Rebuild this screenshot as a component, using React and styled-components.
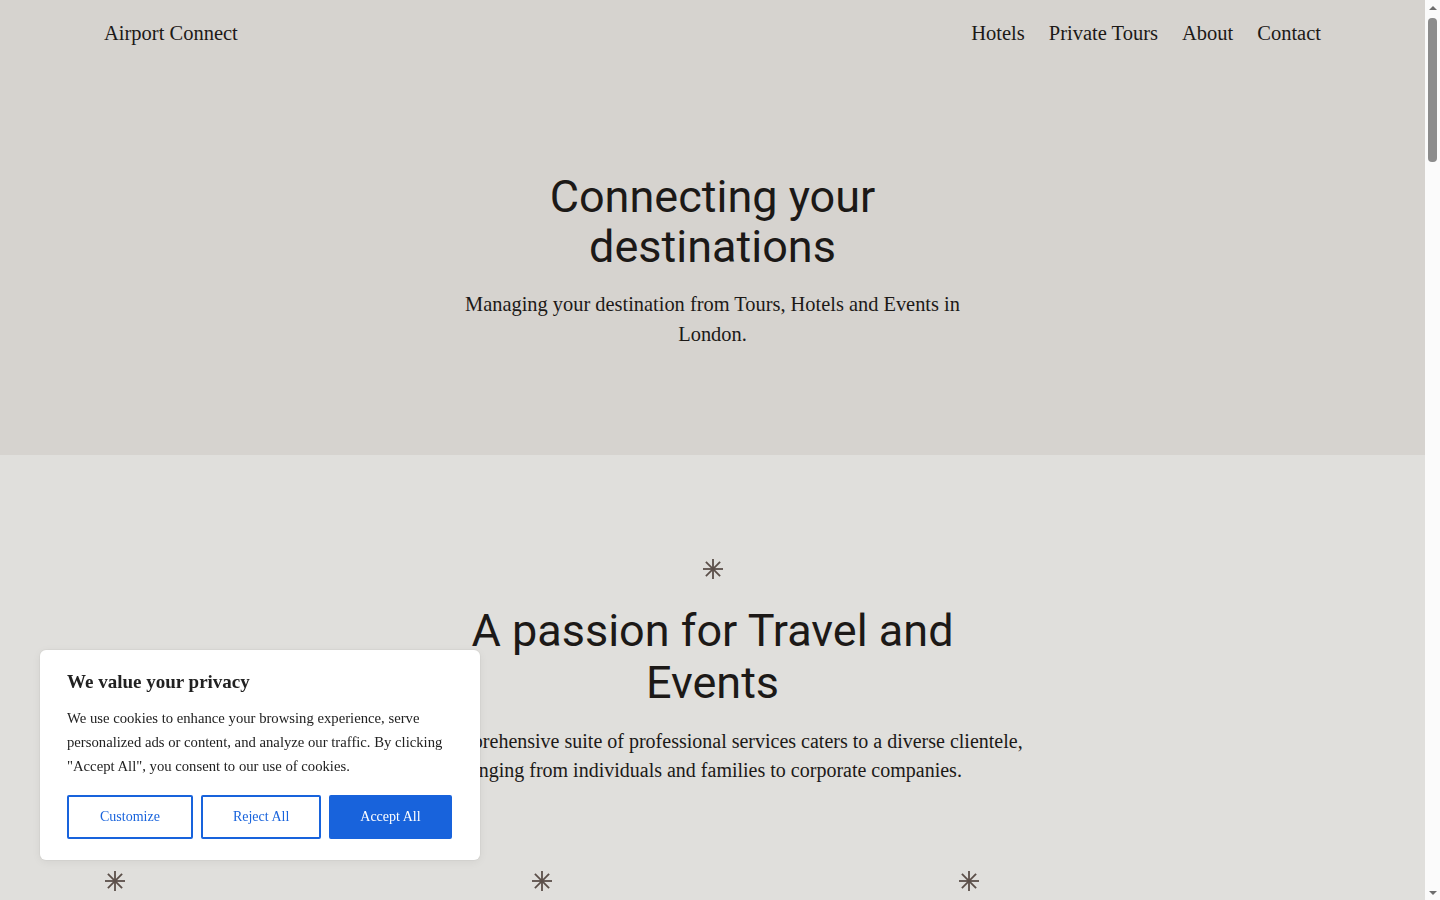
import React from "react";
import styled, { createGlobalStyle } from "styled-components";

const GlobalStyle = createGlobalStyle`
  html, body { margin: 0; padding: 0; }
  body {
    background: #e0dfdc;
    color: #1c1917;
    font-family: "Liberation Serif", "Times New Roman", serif;
    -webkit-font-smoothing: antialiased;
  }
  * { box-sizing: border-box; }
`;

const serif = `"Liberation Serif", "Times New Roman", serif`;
const sans = `Roboto, "Noto Sans", Arial, sans-serif`;

const Page = styled.div`
  margin-right: 15px;
`;

/* window scroll rail drawn at the right edge */
const Rail = styled.aside`
  position: fixed;
  top: 0;
  right: 0;
  width: 15px;
  height: 100vh;
  background: #fbfbfb;
  display: flex;
  flex-direction: column;
  z-index: 20;
`;

const RailArrow = styled.span`
  flex: 0 0 15px;
  display: flex;
  align-items: center;
  justify-content: center;
  &::before {
    content: "";
    border-left: 4px solid transparent;
    border-right: 4px solid transparent;
    ${(p) => (p.$down ? "border-top: 4px solid #6e6e6e;" : "border-bottom: 4px solid #6e6e6e;")}
  }
`;

const RailTrack = styled.div`
  flex: 1;
  padding: 3px 3px 0;
`;

const RailThumb = styled.div`
  width: 9px;
  height: 144px;
  border-radius: 4px;
  background: #8c8c8c;
`;

const Hero = styled.section`
  background: #d6d3cf;
  padding-bottom: 106px;
`;

const Header = styled.header`
  height: 66px;
  padding: 0 104px;
  display: flex;
  align-items: center;
  justify-content: space-between;
`;

const Brand = styled.a`
  font-family: ${serif};
  font-size: 20.5px;
  color: #1c1917;
  text-decoration: none;
`;

const Nav = styled.nav`
  display: flex;
  gap: 24px;
`;

const NavLink = styled.a`
  font-family: ${serif};
  font-size: 20.5px;
  color: #1c1917;
  text-decoration: none;
`;

const HeroBody = styled.div`
  padding-top: 106px;
  display: flex;
  flex-direction: column;
  align-items: center;
  text-align: center;
  gap: 17px;
`;

const DisplayTitle = styled.h1`
  margin: 0;
  max-width: ${(p) => p.$max || 440}px;
  font-family: ${sans};
  font-weight: 400;
  font-size: 45px;
  line-height: ${(p) => p.$lh || 50}px;
  color: #1c1917;
`;

const Lead = styled.p`
  margin: 0;
  max-width: ${(p) => p.$max || 530}px;
  font-family: ${serif};
  font-size: 20.4px;
  line-height: ${(p) => p.$lh || 30}px;
  color: #1c1917;
`;

const Section = styled.section`
  padding: ${(p) => p.$pad || "103px 104px 160px"};
  background: ${(p) => p.$bg || "transparent"};
`;

const Intro = styled.div`
  display: flex;
  flex-direction: column;
  align-items: center;
  text-align: center;
`;

const StarWrap = styled.span`
  display: inline-flex;
  width: 22px;
  height: 22px;
  color: #5b4f49;
  margin-bottom: ${(p) => p.$mb || 25}px;
`;

const Star = ({ mb }) => (
  <StarWrap $mb={mb}>
    <svg viewBox="0 0 22 22" width="22" height="22" fill="none" stroke="currentColor" strokeWidth="1.8" strokeLinecap="butt">
      <line x1="11" y1="1" x2="11" y2="21" />
      <line x1="1" y1="11" x2="21" y2="11" />
      <line x1="3.9" y1="3.9" x2="18.1" y2="18.1" />
      <line x1="18.1" y1="3.9" x2="3.9" y2="18.1" />
    </svg>
  </StarWrap>
);

const IntroText = styled(Lead)`
  margin-top: 18px;
  font-size: 20px;
  line-height: 29px;
`;

const Features = styled.div`
  margin-top: 85px;
  display: grid;
  grid-template-columns: repeat(3, 1fr);
  gap: 64px;
`;

const Feature = styled.div`
  display: flex;
  flex-direction: column;
  align-items: flex-start;
`;

const FeatureTitle = styled.h3`
  margin: 0 0 12px;
  font-family: ${sans};
  font-weight: 400;
  font-size: 28px;
  line-height: 34px;
`;

const FeatureText = styled.p`
  margin: 0;
  font-family: ${serif};
  font-size: 19px;
  line-height: 28px;
`;

const Split = styled.div`
  display: grid;
  grid-template-columns: 1fr 1fr;
  gap: 64px;
  align-items: center;
`;

const Picture = styled.div`
  height: ${(p) => p.$h || 640}px;
  border-radius: 4px;
  background: linear-gradient(160deg, #c9c4bd, #a9a199);
`;

const SplitCopy = styled.div`
  display: flex;
  flex-direction: column;
  gap: 18px;
`;

const SubTitle = styled.h2`
  margin: 0;
  font-family: ${sans};
  font-weight: 400;
  font-size: 38px;
  line-height: 44px;
`;

const Body = styled.p`
  margin: 0;
  font-family: ${serif};
  font-size: 19px;
  line-height: 28px;
`;

const TextLink = styled.a`
  font-family: ${serif};
  font-size: 19px;
  color: #1c1917;
  text-decoration: underline;
`;

const Quote = styled.blockquote`
  margin: 0 auto;
  max-width: 760px;
  text-align: center;
  font-family: ${serif};
  font-size: 28px;
  line-height: 40px;
`;

const Footer = styled.footer`
  background: #d6d3cf;
  padding: 80px 104px 60px;
  display: grid;
  grid-template-columns: 2fr 1fr 1fr;
  gap: 64px;
  min-height: 500px;
`;

const FooterCol = styled.div`
  display: flex;
  flex-direction: column;
  gap: 10px;
  font-family: ${serif};
  font-size: 18px;
`;

/* Cookie consent card */
const Consent = styled.div`
  position: fixed;
  left: 40px;
  bottom: 40px;
  width: 440px;
  padding: 20px 27px 21px;
  background: #ffffff;
  border-radius: 6px;
  box-shadow: 0 0 0 1px rgba(0, 0, 0, 0.03), 0 2px 10px rgba(0, 0, 0, 0.06);
  z-index: 10;
`;

const ConsentTitle = styled.h4`
  margin: 0 0 12px;
  font-family: ${serif};
  font-weight: 700;
  font-size: 19px;
  line-height: 24px;
  color: #212121;
`;

const ConsentText = styled.p`
  margin: 0 0 17px;
  font-family: ${serif};
  font-size: 14.7px;
  line-height: 24px;
  color: #212121;
`;

const ConsentActions = styled.div`
  display: flex;
  gap: 8px;
`;

const ConsentButton = styled.button`
  flex: 0 0 auto;
  height: 44px;
  padding: 0 ${(p) => p.$px || 30}px;
  border: 2px solid #1863dc;
  border-radius: 2px;
  background: ${(p) => (p.$solid ? "#1863dc" : "#ffffff")};
  color: ${(p) => (p.$solid ? "#ffffff" : "#1863dc")};
  font-family: ${serif};
  font-size: 14px;
  white-space: nowrap;
  cursor: pointer;
`;

const features = [
  {
    title: "Hotels",
    text: "Handpicked stays across London, from boutique townhouses to landmark hotels, booked and arranged around your arrival.",
  },
  {
    title: "Private Tours",
    text: "Guided journeys through the city with experienced local hosts, tailored to your interests, schedule and pace.",
  },
  {
    title: "Events",
    text: "Conferences, celebrations and corporate gatherings planned end to end, with transfers and venues taken care of.",
  },
];

export default function App() {
  return (
    <>
      <GlobalStyle />
      <Page>
        <Hero>
          <Header>
            <Brand href="#">Airport Connect</Brand>
            <Nav>
              <NavLink href="#">Hotels</NavLink>
              <NavLink href="#">Private Tours</NavLink>
              <NavLink href="#">About</NavLink>
              <NavLink href="#">Contact</NavLink>
            </Nav>
          </Header>
          <HeroBody>
            <DisplayTitle>Connecting your destinations</DisplayTitle>
            <Lead>Managing your destination from Tours, Hotels and Events in London.</Lead>
          </HeroBody>
        </Hero>

        <Section>
          <Intro>
            <Star />
            <DisplayTitle as="h2" $max={560} $lh={52}>A passion for Travel and Events</DisplayTitle>
            <IntroText $max={640}>
              Our comprehensive suite of professional services caters to a diverse clientele,
              ranging from individuals and families to corporate companies.
            </IntroText>
          </Intro>
          <Features>
            {features.map((f) => (
              <Feature key={f.title}>
                <Star mb={20} />
                <FeatureTitle>{f.title}</FeatureTitle>
                <FeatureText>{f.text}</FeatureText>
              </Feature>
            ))}
          </Features>
        </Section>

        <Section $pad="120px 104px">
          <Split>
            <Picture />
            <SplitCopy>
              <SubTitle>Hotels in the heart of London</SubTitle>
              <Body>
                We work with a curated selection of hotels close to the places you need to be,
                so every stay starts with a smooth transfer from the airport to your door.
              </Body>
              <TextLink href="#">Explore hotels</TextLink>
            </SplitCopy>
          </Split>
        </Section>

        <Section $pad="120px 104px">
          <Split>
            <SplitCopy>
              <SubTitle>Private Tours</SubTitle>
              <Body>
                From the Tower of London to quiet corners of Hampstead, our hosts show you the city
                the way Londoners know it, with private transport throughout.
              </Body>
              <TextLink href="#">View tours</TextLink>
            </SplitCopy>
            <Picture />
          </Split>
        </Section>

        <Section $pad="120px 104px">
          <Split>
            <Picture />
            <SplitCopy>
              <SubTitle>Events</SubTitle>
              <Body>
                Whether it is a product launch or a family celebration, we coordinate venues,
                suppliers and guest travel so the day runs exactly to plan.
              </Body>
              <TextLink href="#">Plan an event</TextLink>
            </SplitCopy>
          </Split>
        </Section>

        <Section $pad="180px 104px" $bg="#d6d3cf">
          <Intro>
            <Star />
            <Quote>
              “From the moment we landed everything was taken care of. The tour was the highlight
              of our trip to London.”
            </Quote>
          </Intro>
        </Section>

        <Section $pad="140px 104px">
          <Intro>
            <Star />
            <DisplayTitle as="h2" $max={560} $lh={52}>Get in touch</DisplayTitle>
            <IntroText $max={560}>
              Tell us about your trip and we will put together a plan that fits.
            </IntroText>
          </Intro>
        </Section>

        <Footer>
          <FooterCol>
            <Brand href="#">Airport Connect</Brand>
            <span>London, United Kingdom</span>
          </FooterCol>
          <FooterCol>
            <NavLink href="#">Hotels</NavLink>
            <NavLink href="#">Private Tours</NavLink>
          </FooterCol>
          <FooterCol>
            <NavLink href="#">About</NavLink>
            <NavLink href="#">Contact</NavLink>
          </FooterCol>
        </Footer>
      </Page>

      <Consent>
        <ConsentTitle>We value your privacy</ConsentTitle>
        <ConsentText>
          We use cookies to enhance your browsing experience, serve personalized ads or content,
          and analyze our traffic. By clicking "Accept All", you consent to our use of cookies.
        </ConsentText>
        <ConsentActions>
          <ConsentButton $px={31}>Customize</ConsentButton>
          <ConsentButton $px={30}>Reject All</ConsentButton>
          <ConsentButton $px={29} $solid>Accept All</ConsentButton>
        </ConsentActions>
      </Consent>

      <Rail aria-hidden="true">
        <RailArrow />
        <RailTrack>
          <RailThumb />
        </RailTrack>
        <RailArrow $down />
      </Rail>
    </>
  );
}
